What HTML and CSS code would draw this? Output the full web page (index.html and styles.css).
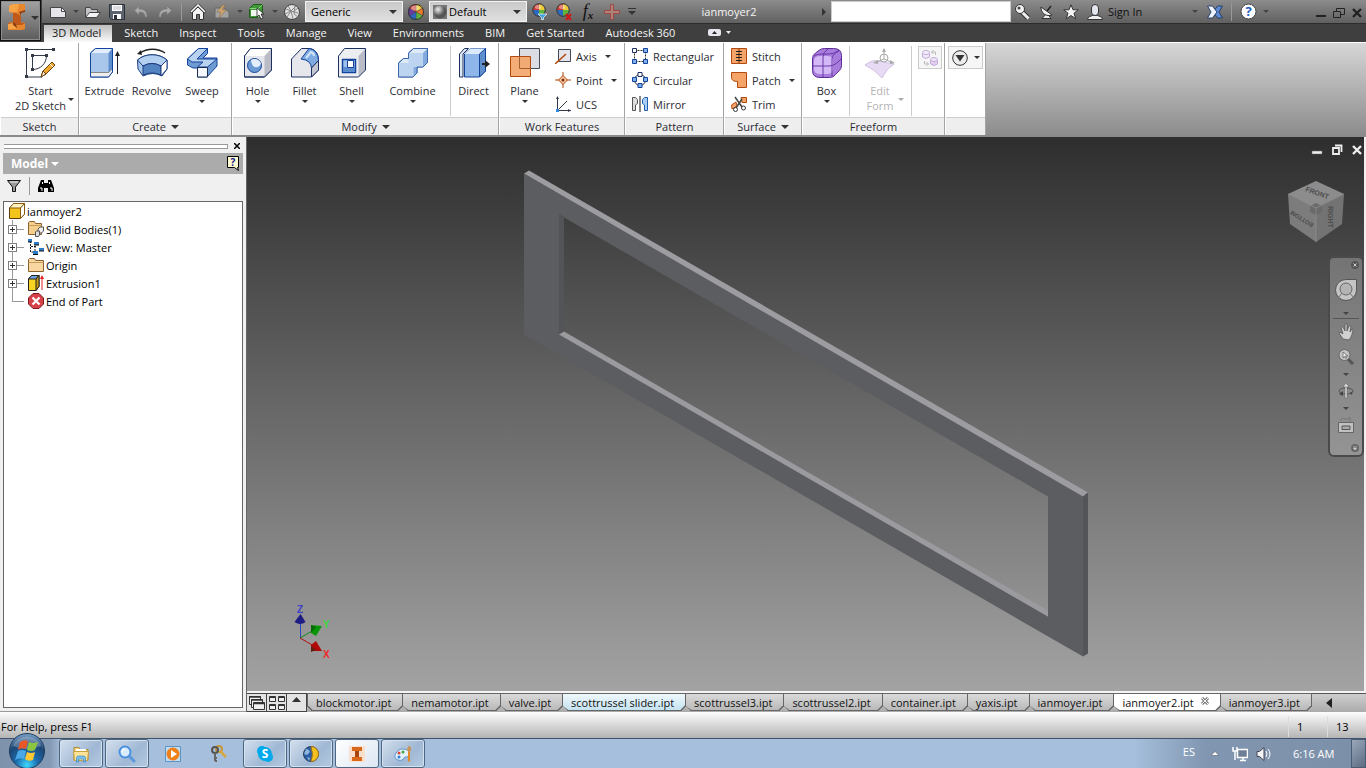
FILE: index.html
```html
<!DOCTYPE html>
<html lang="en">
<head>
    <meta charset="UTF-8">
    <meta name="viewport" content="width=device-width, initial-scale=1.0">
    <title>ianmoyer2</title>
    <link rel="stylesheet" href="styles.css">
</head>
<body>
    <header class="top">
        <button class="app-btn" aria-label="Application menu">
            <svg width="18" height="28" viewBox="0 0 18 28">
                <path fill="#e8862e" d="M1 2 5 0h12v8l-4 1v9l4 1v6l-3 1H0v-7l5-1V9L1 8z"/>
                <path fill="#c05a1c" d="M5 9h3l5 3v7l-5 1-3-2zM0 19l8-1 9 1-3 2H0z"/>
                <path fill="#f7a446" d="M1 2 5 0h6L9 8H5L1 8zM0 20l6-1 2 6H0z"/>
                <path fill="#8d3f14" d="m11 8 6-2v2l-4 1v3zM5 18l3 2 1 4-4-3z"/>
            </svg>
            <span class="caret big"></span>
        </button>
        <div class="title-bar">
            <button class="q-btn" aria-label="New">
                <svg width="16" height="16" viewBox="0 0 16 16"><path d="M.5 3.500h11l4 4v6H.5z" fill="#e6e6ea" stroke="#44444a"/><path d="M11.500 3.500v4h4z" fill="#fff" stroke="#44444a"/></svg>
            </button>
            <button class="q-drop" aria-label="New options"><span class="caret dim"></span></button>
            <button class="q-btn" aria-label="Open">
                <svg width="16" height="16" viewBox="0 0 16 16"><path d="M.5 13.500v-10h5l1 2h6v3" fill="#c4c4c8" stroke="#444"/><path d="m.5 13.500 4-5h11l-4 5z" fill="#f4f4f4" stroke="#444"/></svg>
            </button>
            <button class="q-btn" aria-label="Save">
                <svg width="16" height="16" viewBox="0 0 16 16"><path d="M.5.500h15v15h-13l-2-2z" fill="#5c6470" stroke="#2c3038"/><path d="M3 1h10v6H3z" fill="#fff"/><path d="M4 3h8M4 5h8" stroke="#b8bcc4"/><path d="M4 10h8v5H4z" fill="#fff"/><path d="M5 11h3v4H5z" fill="#2c3038"/></svg>
            </button>
            <button class="q-btn" aria-label="Undo">
                <svg width="14" height="14" viewBox="0 0 14 14"><path d="M.5 5.500 5 1v3c5 0 8 2 8 8h-2c0-4-2-5-6-5v3z" fill="#aaa" stroke="#777" stroke-width=".6"/></svg>
            </button>
            <button class="q-btn" aria-label="Redo">
                <svg width="14" height="14" viewBox="0 0 14 14"><path d="M13.500 5.500 9 1v3c-5 0-8 2-8 8h2c0-4 2-5 6-5v3z" fill="#aaa" stroke="#777" stroke-width=".6"/></svg>
            </button>
            <span class="q-sep"></span>
            <button class="q-btn" aria-label="Home">
                <svg width="16" height="16" viewBox="0 0 16 16"><path d="M2.500 8v7.500h4v-5h3v5h4V8L8 3z" fill="#f2f2f2" stroke="#333"/><path d="M.5 8.500 8 1l7.500 7.500" fill="none" stroke="#333" stroke-width="3"/><path d="M1 8 8 1l7 7" fill="none" stroke="#fff" stroke-width="1.500"/></svg>
            </button>
            <button class="q-btn" aria-label="Update">
                <svg width="16" height="16" viewBox="0 0 16 16"><path d="M1 4h9l5 4v6H1z" fill="#a2a2a2" stroke="#666"/><path d="M9 1 3 8h4l-2 6 7-8H8l3-5z" fill="#d0a870" stroke="#8a6234" stroke-width=".5"/></svg>
            </button>
            <button class="q-drop" aria-label="Update options"><span class="caret dim"></span></button>
            <button class="q-btn" aria-label="Selection">
                <svg width="16" height="16" viewBox="0 0 16 16"><path d="m.5 4.500 4-4h9v9l-4 4h-9z" fill="#3e9a36" stroke="#1e5a1a"/><path d="M2 6h6v6H2z" fill="#f2f6f0"/><path d="m9.500 4.500 4-4m-13 4h9v9" stroke="#8cd084" fill="none"/><path d="M8 4v9l2-2 2 4 2-1-2-4h3z" fill="#fff" stroke="#222" stroke-width=".8"/></svg>
            </button>
            <button class="q-drop" aria-label="Selection options"><span class="caret dim"></span></button>
            <button class="q-btn" aria-label="Adjust material">
                <svg width="16" height="16" viewBox="0 0 16 16"><circle cx="8" cy="8" r="7.500" fill="#e0e0e0" stroke="#444"/><path d="m2 5 5 2 5-5M1 10l6-3 2 8M7 7l7 2M4 2l3 5-4 6M11 1l-1 9 4 3M9 8l5-4" stroke="#888" fill="none"/></svg>
            </button>
            <div class="pick">
                <select aria-label="Material"><option>Generic</option></select>
                <span class="caret big"></span>
            </div>
            <button class="q-btn" aria-label="Appearance">
                <svg width="16" height="16" viewBox="0 0 16 16"><g stroke="#444" stroke-width=".4"><path d="M8 8V0a8 8 0 0 1 7 4z" fill="#f0c93c"/><path d="m8 8 7-4a8 8 0 0 1 0 8z" fill="#e87c2c"/><path d="m8 8 7 4a8 8 0 0 1-7 4z" fill="#5fb53c"/><path d="M8 8v8a8 8 0 0 1-7-4z" fill="#2a69c4"/><path d="m8 8-7 4a8 8 0 0 1 0-8z" fill="#6a3ba0"/><path d="M8 8 1 4a8 8 0 0 1 7-4z" fill="#d23a34"/></g><circle cx="8" cy="8" r="7.500" fill="none" stroke="#333"/><ellipse cx="7" cy="4" rx="4" ry="2.500" fill="#fff" opacity=".4"/></svg>
            </button>
            <div class="pick">
                <svg width="14" height="14" viewBox="0 0 14 14"><defs><radialGradient id="ball" cx=".35" cy=".3"><stop offset="0" stop-color="#eee"/><stop offset="1" stop-color="#555"/></radialGradient></defs><path fill="#777" d="M0 0h14v14H0z"/><circle cx="7" cy="7" r="6.500" fill="url(#ball)"/></svg>
                <select aria-label="Appearance style"><option>Default</option></select>
                <span class="caret big"></span>
            </div>
            <button class="q-btn" aria-label="Adjust appearance">
                <svg width="16" height="18" viewBox="0 0 16 18"><path d="M7 7V1a6 6 0 0 1 6 6z" fill="#f0c93c"/><path d="M7 7h6a6 6 0 0 1-6 6z" fill="#5fb53c"/><path d="M7 7v6a6 6 0 0 1-6-6z" fill="#2a69c4"/><path d="M7 7H1a6 6 0 0 1 6-6z" fill="#d23a34"/><ellipse cx="6" cy="4" rx="3" ry="2" fill="#fff" opacity=".4"/><circle cx="7" cy="7" r="6.300" fill="none" stroke="#333"/><path d="M6 11h9l-3.500 3.500v2h-2v-2z" fill="#3aa0e0" stroke="#fff" stroke-width=".7"/></svg>
            </button>
            <button class="q-btn" aria-label="Clear appearance">
                <svg width="16" height="18" viewBox="0 0 16 18"><path d="M7 7V1a6 6 0 0 1 6 6z" fill="#f0c93c"/><path d="M7 7h6a6 6 0 0 1-6 6z" fill="#5fb53c"/><path d="M7 7v6a6 6 0 0 1-6-6z" fill="#2a69c4"/><path d="M7 7H1a6 6 0 0 1 6-6z" fill="#d23a34"/><ellipse cx="6" cy="4" rx="3" ry="2" fill="#fff" opacity=".4"/><circle cx="7" cy="7" r="6.300" fill="none" stroke="#333"/><path d="m10 11 5 6m0-6-5 6" stroke="#d01818" stroke-width="2"/></svg>
            </button>
            <button class="q-btn fx" aria-label="Parameters"><i>f</i><sub>x</sub></button>
            <button class="q-btn" aria-label="Add">
                <svg width="16" height="16" viewBox="0 0 16 16"><path d="M6.500.500h3v6h6v3h-6v6h-3v-6h-6v-3h6z" fill="#b0827c" stroke="#a04840"/></svg>
            </button>
            <button class="q-drop wide" aria-label="Customize">
                <svg width="8" height="7" viewBox="0 0 8 7"><path d="M0 0h8v1H0zM0 3h8L4 7z" fill="#333"/></svg>
            </button>
            <h1 class="doc-title">ianmoyer2</h1>
            <span class="arrow-right"></span>
            <input class="search" type="text" aria-label="Search help">
            <button class="q-btn" aria-label="Search">
                <svg width="16" height="16" viewBox="0 0 16 16"><path d="m7 8 6 6" stroke="#333" stroke-width="5"/><path d="m7 8 6.500 6.500" stroke="#f0f0f0" stroke-width="3"/><circle cx="5" cy="5" r="4.500" fill="#f0f0f0" stroke="#333"/><circle cx="4" cy="4" r="1.500" fill="#444"/></svg>
            </button>
            <button class="q-btn" aria-label="Communication center">
                <svg width="16" height="16" viewBox="0 0 16 16"><path d="M3 14.500 8 9l4 5.500z" fill="#eee" stroke="#333"/><path d="M2 3a8 8 0 0 0 11 8z" fill="#f2f2f2" stroke="#333"/><path d="m8 7 4-5" stroke="#222" stroke-width="1.500"/></svg>
            </button>
            <button class="q-btn" aria-label="Favorites">
                <svg width="16" height="16" viewBox="0 0 16 16"><path d="m8 .8 2 5h5.300L11 9.200l1.700 5.600L8 11.500l-4.700 3.300L5 9.200.7 5.800H6z" fill="#f4f4f4" stroke="#333"/></svg>
            </button>
            <button class="q-btn" aria-label="Account">
                <svg width="16" height="16" viewBox="0 0 16 16"><path d="M.5 15.500c0-3 3-3 5-4h5c2 1 5 1 5 4z" fill="#eee" stroke="#333"/><rect x="4.500" y=".5" width="7" height="11" rx="3.500" fill="#e4e6ee" stroke="#333"/></svg>
            </button>
            <button class="sign-in">Sign In<span class="caret dim"></span></button>
            <button class="q-btn" aria-label="Exchange apps">
                <svg width="16" height="14" viewBox="0 0 16 14"><path d="M15.500 1h-5L6 7l4.500 6h5L12 7z" fill="#5d8ad0" stroke="#27406c"/><path d="M.5 1h5L10 7l-4.500 6h-5L4 7z" fill="#eef2fa" stroke="#27406c"/></svg>
            </button>
            <span class="q-sep"></span>
            <button class="q-btn" aria-label="Help">
                <svg width="17" height="17" viewBox="0 0 17 17"><circle cx="8.500" cy="8.500" r="7.500" fill="#fff" stroke="#444"/><text x="8.500" y="13" text-anchor="middle" class="q-mark">?</text></svg>
            </button>
            <button class="q-drop" aria-label="Help options"><span class="caret dim"></span></button>
            <div class="win-btns">
                <button aria-label="Minimize"><svg width="10" height="12" viewBox="0 0 10 12"><path fill="#222" d="M0 8h10v2H0z"/></svg></button>
                <button aria-label="Restore"><svg width="12" height="12" viewBox="0 0 12 12"><path d="M3.500 4V1.500h8v6H8M.5 4.500h7v6h-7z" fill="none" stroke="#222"/></svg></button>
                <button aria-label="Close"><svg width="10" height="12" viewBox="0 0 10 12"><path d="m1 2 8 8m0-8-8 8" stroke="#222" stroke-width="2.400"/></svg></button>
            </div>
        </div>
        <nav class="ribbon-tabs">
            <a href="#" class="active">3D Model</a>
            <a href="#">Sketch</a>
            <a href="#">Inspect</a>
            <a href="#">Tools</a>
            <a href="#">Manage</a>
            <a href="#">View</a>
            <a href="#">Environments</a>
            <a href="#">BIM</a>
            <a href="#">Get Started</a>
            <a href="#">Autodesk 360</a>
            <button class="collapse" aria-label="Minimize ribbon">
                <svg width="24" height="8" viewBox="0 0 24 8"><rect width="13" height="7" rx="2" fill="#e6e6ee"/><path d="m4 5 2.500-3L9 5z" fill="#222"/><path d="M18 2h5l-2.500 3z" fill="#eee"/></svg>
            </button>
        </nav>
    </header>

    <section class="ribbon">
        <div class="panel">
            <div class="panel-body">
                <button class="big-btn side start">
                    <span>
                        <svg width="32" height="32" viewBox="0 0 32 32"><path d="M30 2.500H2.500V30H18M8.500 22.500v-14h14c0 8-6 14-14 14" fill="none" stroke="#333a48"/><path d="M1 1h3v3H1zM28 1h3v3h-3zM1 28h3v3H1zM7 7h3v3H7zM21 7h3v3h-3zM7 21h3v3H7z" fill="#333a48"/><path d="m17 30 2-6L28 15l3 3-9 9z" fill="#f0a830" stroke="#6b4410"/><path d="m17 30 2-6 3 3z" fill="#f4e4c8" stroke="#6b4410"/><path d="m26 17 3 3" stroke="#fff"/></svg>
                        Start<br>2D Sketch
                    </span>
                    <i class="caret"></i>
                </button>
            </div>
            <h2>Sketch</h2>
        </div>

        <div class="panel">
            <div class="panel-body">
                <button class="big-btn">
                    <svg width="32" height="32" viewBox="0 0 32 32"><path d="m1.500 6 5-4.500h17V25l-4 5h-18z" fill="#a9c7ea" stroke="#14439c"/><path d="m1.500 6 5-4.500h17L19.500 6z" fill="#e2eefb"/><path d="m19.500 6 4-4.500V25l-4 5z" fill="#5f8fcc"/><path d="M2 26h17.500l4-4v3l-4 5H2z" fill="#eee"/><path d="M2 25.500h17.500l4-4" stroke="#888" fill="none"/><path d="m1.500 6 5-4.500h17V25l-4 5h-18z" fill="none" stroke="#14439c"/><path d="M28.500 27V6" stroke="#222"/><path d="m26 9 2.500-5L31 9z" fill="#222"/></svg>
                    Extrude
                </button>
                <button class="big-btn">
                    <svg width="32" height="32" viewBox="0 0 32 32"><path d="M29 6C22 1 11 1 4 6" fill="none" stroke="#222" stroke-width="1.500"/><path d="M1 7 5 3l1 5z" fill="#222"/><path d="M1.500 13C9 6 23 6 31 13v9l-5 7q-9-5-19 0l-5-7z" fill="#a9c7ea" stroke="#1c3e80"/><path d="M1.500 13 7 19q9-5 18 0l6-6C23 6 9 6 1.500 13z" fill="#b4d0f0" stroke="#1c3e80"/><path d="M7 19q9-5 18 0v9q-9-4-18 0z" fill="#5383c0" stroke="#1c3e80"/><path d="m25 19 6-6v9l-6 7z" fill="#fff" stroke="#1c3e80"/></svg>
                    Revolve
                </button>
                <button class="big-btn sweep">
                    <svg width="32" height="32" viewBox="0 0 32 32"><path d="m1.500 12 11-10.500h9v5L17 11h14v8L21 30H11.500v-9H7l-5.500-3z" fill="#6f9bd2" stroke="#14439c"/><path d="m1.500 12 11-10.500h9L11 12h20l-9.500 8h-10L17 15H6z" fill="#b8d2f0" stroke="#14439c"/><path d="M11.500 20.500h10V30h-10z" fill="#f4f7fb" stroke="#1c2c50"/></svg>
                    Sweep
                    <i class="caret"></i>
                </button>
            </div>
            <h2>Create <i class="caret big"></i></h2>
        </div>

        <div class="panel">
            <div class="panel-body">
                <button class="big-btn">
                    <svg width="32" height="32" viewBox="0 0 32 32"><path d="m2.500 9 6-7.500h21V23l-7 7h-20z" fill="#e6e7ec" stroke="#1c3060"/><path d="M2.500 9 8.500 1.500h21L22.500 9z" fill="#fff"/><path d="m22.500 9 7-7.500V23l-7 7z" fill="#b9bcc6"/><path d="m2.500 9 6-7.500h21V23l-7 7h-20z" fill="none" stroke="#1c3060"/><circle cx="12.500" cy="18.500" r="7" fill="#6a9ad4" stroke="#14439c"/><path d="M9 13a7 7 0 0 1 10 3c-1 5-6 5-8 3-1-2-2-4-2-6z" fill="#e4effb"/></svg>
                    Hole
                    <i class="caret"></i>
                </button>
                <button class="big-btn">
                    <svg width="32" height="32" viewBox="0 0 32 32"><path d="m2.500 12 10-10.500h9q8 2 8 12V23l-7 7h-20z" fill="#e6e7ec" stroke="#1c3060"/><path d="m12 12 8-10.500q9 1 9.500 12l-7 7.500Q22 13 12 12z" fill="#7fabe0" stroke="#14439c"/><path d="m22.500 21 7-7.500V23l-7 7z" fill="#c4c7d0" stroke="#1c3060"/><path d="m17 11 5-6q3 1 3 4" stroke="#cfe4fa" fill="none" stroke-width="2"/></svg>
                    Fillet
                    <i class="caret"></i>
                </button>
                <button class="big-btn">
                    <svg width="32" height="32" viewBox="0 0 32 32"><path d="m2.500 9 6-7.500h21V23l-7 7h-20z" fill="#eceef2"/><path d="m22.500 9 7-7.500V23l-7 7z" fill="#b9bcc6"/><path d="m2.500 9 6-7.500h21V23l-7 7h-20z" fill="none" stroke="#1c3060"/><path d="M6.500 12.500h13v13h-13z" fill="#9dc0ec" stroke="#14439c" stroke-width="1.500"/><path d="M7 20v5h12v-5z" fill="#5c8cd0"/><path d="M11.500 13.500h6v7h-6z" fill="#fff" stroke="#14439c"/></svg>
                    Shell
                    <i class="caret"></i>
                </button>
                <button class="big-btn combine">
                    <svg width="32" height="32" viewBox="0 0 32 32"><path d="m1.500 16 5-4.500h5V6l5-4.500h14v14L26 20h-6v6l-4 4H1.500z" fill="#dce9f8" stroke="#3c68ac"/><path d="M11.500 6H26v14h-9.500v-4h-5zM1.500 16h15v14h-15z" fill="#bdd4f0"/><path d="m26 6 4.500-4.500v14L26 20zM16.500 20H20v6l-3.500 4z" fill="#84aade"/><path d="m1.500 16 5-4.500h5V6l5-4.500h14v14L26 20h-6v6l-4 4H1.500z" fill="none" stroke="#3c68ac"/></svg>
                    Combine
                    <i class="caret"></i>
                </button>
                <span class="rule"></span>
                <button class="big-btn">
                    <svg width="32" height="32" viewBox="0 0 32 32"><path d="m1.500 7 5-5.500h4L5 7v23H1.500z" fill="#dfe8f4" stroke="#1c3060"/><path d="m6.500 7 6-5.500h15V24l-6 6h-15z" fill="#8eb6e8" stroke="#14439c"/><path d="m6.500 7 6-5.500h15L21.500 7z" fill="#dcebfb"/><path d="m21.500 7 6-5.500V24l-6 6z" fill="#5f8fcc" stroke="#14439c"/><path d="M24 17h6" stroke="#222" stroke-width="2"/><path d="m27 13 5 4-5 4z" fill="#222"/></svg>
                    Direct
                </button>
            </div>
            <h2>Modify <i class="caret big"></i></h2>
        </div>

        <div class="panel">
            <div class="panel-body">
                <button class="big-btn plane">
                    <svg width="32" height="32" viewBox="0 0 32 32"><path d="M10.500 1.500h20v20h-20z" fill="#dcdde2" stroke="#444a58"/><path d="M1.500 9.500h20v20h-20z" fill="#f4a468" fill-opacity=".9" stroke="#b24a10"/><path d="M10.500 9.500v12h11" fill="none" stroke="#a06030"/></svg>
                    Plane
                    <i class="caret"></i>
                </button>
                <div class="stack work">
                    <button><svg width="16" height="16" viewBox="0 0 16 16"><path d="M3.500 1.500h12v12h-12z" fill="#e4e5ea" stroke="#444a58"/><path d="m0 16 11-10" stroke="#b24a10" stroke-width="1.500"/></svg>Axis<i class="caret"></i></button>
                    <button><svg width="16" height="16" viewBox="0 0 16 16"><path d="m8 3.500 4.500 4.500L8 12.500 3.500 8z" fill="#f8c8a0" stroke="#b24a10"/><path d="M8 0v4m0 8v4M0 8h4m8 0h4" stroke="#b24a10"/><circle cx="8" cy="8" r="1.500" fill="#7a3008"/></svg>Point<i class="caret"></i></button>
                    <button><svg width="16" height="16" viewBox="0 0 16 16"><path d="M2.500 1v13.500H16M3 14l9-9" fill="none" stroke="#333a48"/><path d="M1 3 2.500 0 4 3m9 10 3 1.500-3 1.500" fill="#333a48"/><path d="M1 13h3v3H1z" fill="#2c8ae0"/></svg>UCS</button>
                </div>
            </div>
            <h2>Work Features</h2>
        </div>

        <div class="panel">
            <div class="panel-body">
                <div class="stack pattern">
                    <button><svg width="16" height="16" viewBox="0 0 16 16"><path d="M2.500 2.500h11v11h-11z" fill="none" stroke="#333" stroke-dasharray="2 1"/><path d="M.5.500h4v4h-4z" fill="#fff" stroke="#1c3060"/><path d="M11.500.500h4v4h-4zM.5 11.500h4v4h-4zM11.500 11.500h4v4h-4z" fill="#7fb0ec" stroke="#14439c"/></svg>Rectangular</button>
                    <button><svg width="16" height="16" viewBox="0 0 16 16"><circle cx="8" cy="8" r="5.500" fill="none" stroke="#333"/><path d="M6 .5h4v4H6z" fill="#fff" stroke="#1c3060"/><path d="M.5 5.500h4v4h-4zM11.500 5.500h4v4h-4zM6 11.500h4v4H6z" fill="#7fb0ec" stroke="#14439c"/></svg>Circular</button>
                    <button><svg width="16" height="16" viewBox="0 0 16 16"><path d="M.5 1.500h3l2 2v4L3.500 9v5.500h-3z" fill="#ddd" stroke="#555"/><path d="M15.500 1.500h-3l-2 2v4l2 1.500v5.500h3z" fill="#a9ccf4" stroke="#1c60b4"/><path d="M8 0v16" stroke="#111"/></svg>Mirror</button>
                </div>
            </div>
            <h2>Pattern</h2>
        </div>

        <div class="panel">
            <div class="panel-body">
                <div class="stack surface">
                    <button><svg width="16" height="16" viewBox="0 0 16 16"><path d="M.5.500h15v15H.5z" fill="#f4a468" stroke="#b24a10"/><path d="M8 1v14" stroke="#7a3008"/><path d="M5 3.500h6m-6 3h6m-6 3h6m-6 3h6" stroke="#222"/></svg>Stitch</button>
                    <button><svg width="16" height="16" viewBox="0 0 16 16"><path d="M.5.500h15v15h-9v-6q-6 0-6-4z" fill="#f4a468" stroke="#b24a10"/></svg>Patch<i class="caret"></i></button>
                    <button><svg width="16" height="16" viewBox="0 0 16 16"><path d="M10 1.500h5.500v5H11zM.5 9 5 6l1 4-5 3z" fill="#f4a468" stroke="#b24a10"/><path d="m4 1 7 10M11 3 5 12" stroke="#444" stroke-width="1.500"/><circle cx="4.500" cy="13.500" r="2" fill="#fff" stroke="#333"/><circle cx="12.500" cy="12" r="2" fill="#fff" stroke="#333"/></svg>Trim</button>
                </div>
            </div>
            <h2>Surface <i class="caret big"></i></h2>
        </div>

        <div class="panel">
            <div class="panel-body">
                <button class="big-btn box">
                    <svg width="32" height="32" viewBox="0 0 32 32"><path d="M1.500 12q0-4 3-6l4-3q2-1.500 5-1.500h9q8 0 8 7v10q0 3-2 5l-4 4q-2 3-6 3H9q-7.500 0-7.500-7z" fill="#a87cdc" stroke="#5a2c96"/><path d="M3 14q0-5 6-5h7q6 0 6 5v7q0 6-6 6H9q-6 0-6-6z" fill="#d4b8f6"/><path d="M2 19h16q6 0 12-7M12 30V10q0-5 5-8M21 29V12q0-5 7-8M3 9q3-2 8-2h7q6 0 10-4" fill="none" stroke="#6a38a8"/></svg>
                    Box
                    <i class="caret"></i>
                </button>
                <span class="rule"></span>
                <button class="big-btn side edit" disabled>
                    <span>
                        <svg width="32" height="32" viewBox="0 0 32 32"><path d="M1 18q8-6 15-4 6 2 14 3-8 5-12 14Q10 22 1 18z" fill="#e6daf4" stroke="#d0c0e0"/><path d="M20 12V2m0 10 9 4m-9-4-9 4" stroke="#aaa"/><path d="m18 5 2-4 2 4zm8 8 5 3-5 1zm-12 0-5 3 5 1z" fill="#aaa"/><circle cx="20" cy="11" r="4" fill="none" stroke="#aaa"/></svg>
                        Edit<br>Form
                    </span>
                    <i class="caret"></i>
                </button>
                <span class="rule"></span>
                <button class="tool" disabled aria-label="Convert">
                    <svg width="18" height="18" viewBox="0 0 18 18"><path d="M1.500 4v4q3.500 3 7 0V4" fill="#f0e8fa" stroke="#c4acdc"/><ellipse cx="5" cy="3.500" rx="3.500" ry="2" fill="#f6f0fc" stroke="#c4acdc"/><path d="M9.500 11v4q3.500 3 7 0v-4" fill="#e0d0f0" stroke="#c4acdc"/><ellipse cx="13" cy="10.500" rx="3.500" ry="2" fill="#eee4f8" stroke="#c4acdc"/><path d="M14.500 6V3h-4m2-2-2 2 2 2M3.500 12v3h4m-2-2 2 2-2 2" fill="none" stroke="#bbb"/></svg>
                </button>
            </div>
            <h2>Freeform</h2>
        </div>

        <div class="panel">
            <div class="panel-body">
                <button class="tool wide" aria-label="Panel options">
                    <svg width="16" height="16" viewBox="0 0 16 16"><circle cx="8" cy="8" r="7.300" fill="#ececec" stroke="#333"/><path d="M3.500 5h9L8 11.500z" fill="#333"/></svg>
                    <i class="caret"></i>
                </button>
            </div>
            <h2></h2>
        </div>
    </section>

    <main>
        <aside class="browser">
            <div class="grip"><span></span><button aria-label="Close browser"><svg width="6" height="6" viewBox="0 0 6 6"><path d="m0 0 6 6m0-6-6 6" stroke="#000" stroke-width="1.500"/></svg></button></div>
            <div class="browser-title">
                <h2>Model <i class="caret big"></i></h2>
                <button aria-label="Browser help"><svg width="14" height="15" viewBox="0 0 14 15"><path d="M1.500.500h11v11h-1l1 3-4-3h-7z" fill="#fffbd0" stroke="#000"/><text x="7" y="10" text-anchor="middle" class="tip-mark">?</text></svg></button>
            </div>
            <div class="browser-tools">
                <button aria-label="Filter"><svg width="14" height="12" viewBox="0 0 14 12"><path d="M.5.500h13L8.500 7v4.500h-3V7z" fill="#999" stroke="#111"/><path d="M3 2h8" stroke="#eee"/></svg></button>
                <span></span>
                <button aria-label="Find"><svg width="16" height="14" viewBox="0 0 16 14"><path d="M3 1h3v3h4V1h3l3 8v4h-6V9H6v4H0V9z" fill="#000"/><path d="M2 9h2v3M12 9h2v3M4.500 3v2m7-2v2" stroke="#fff" fill="none"/></svg></button>
            </div>
            <ul class="tree">
                <li class="root">
                    <svg width="18" height="18" viewBox="0 0 18 18"><path d="m1.500 6 4-4.500h11V12l-4 4.500h-11z" fill="#f2c41c" stroke="#5a3c10"/><path d="m1.500 6 4-4.500h11L12.500 6z" fill="#fff4c0" stroke="#8a5a14"/><path d="m12.500 6 4-4.500V12l-4 4.500z" fill="#fff" stroke="#8a5a14"/></svg>
                    ianmoyer2
                </li>
                <li>
                    <button class="expander" aria-label="Expand Solid Bodies"></button>
                    <svg width="16" height="16" viewBox="0 0 16 16"><path d="M.5 13.500V1.500l1-1h5l1 2h6v11z" fill="#f4d08c" stroke="#8a6030"/><path d="M.5 4.500h13" stroke="#c89c58"/><path d="m10 8 2-2h3.500v4l-2 2H10z" fill="#eee" stroke="#555"/><path d="m7.500 11 1-1h3v4l-1 1.500h-3z" fill="#ddd" stroke="#555"/></svg>
                    Solid Bodies(1)
                </li>
                <li>
                    <button class="expander" aria-label="Expand View"></button>
                    <svg width="16" height="16" viewBox="0 0 16 16"><path d="M2.500 2v11H7M3 7.500h5M7 7v6" fill="none" stroke="#222" stroke-dasharray="2 1"/><path d="M0 0h4v3H0zM6 3h5v3H6zM11 9h5v3h-5zM5 12h5v3H5z" fill="#2a7ac8"/><path d="M6 6h5M11 12h5M5 15.500h5M0 3h4" stroke="#111"/></svg>
                    View: Master
                </li>
                <li>
                    <button class="expander" aria-label="Expand Origin"></button>
                    <svg width="16" height="16" viewBox="0 0 16 16"><path d="M.5 14.500V2.500l1-1h5l1 2h8v11z" fill="#f8d8a0" stroke="#8a6030"/><path d="M.5 5.500h15" stroke="#c89c58"/></svg>
                    Origin
                </li>
                <li>
                    <button class="expander" aria-label="Expand Extrusion1"></button>
                    <svg width="16" height="16" viewBox="0 0 16 16"><path d="m.5 4 3-3.500h7.500v11L8 15.500H.500z" fill="#f8d420" stroke="#222"/><path d="m.5 4 3-3.500H11L8 4z" fill="#6fa4dc" stroke="#222"/><path d="m8 4 3-3.500v11L8 15.500z" fill="#c89810" stroke="#222"/><path d="M14 15V2" stroke="#e02020"/><path d="m12 4 2-4 2 4z" fill="#e02020"/></svg>
                    Extrusion1
                </li>
                <li class="end">
                    <span class="expander"></span>
                    <svg width="16" height="16" viewBox="0 0 16 16"><path d="M5 .5h6L15.500 5v6L11 15.500H5L.5 11V5z" fill="#d8404a" stroke="#7c1820"/><path d="m4.500 4.500 7 7m0-7-7 7" stroke="#fff" stroke-width="2.200"/></svg>
                    End of Part
                </li>
            </ul>
        </aside>

        <section class="work-area">
            <div class="canvas">
                <svg class="model" viewBox="247 138 1117 553">
                    <path fill="#5c5d61" fill-rule="evenodd" d="M524 174 1083 496V657L524 335zM559 215V335L1048 617V497z"/>
                    <path fill="#9c9ca1" d="m524 174 5-3 559 322-5 4z"/>
                    <path fill="#535458" d="m1083 497 5-4v161l-5 3zM559 215l5 3v115l-5 2z"/>
                    <path fill="#9a9a9f" d="m559 335 5-3 484 279v6z"/>
                </svg>

                <div class="doc-btns">
                    <button aria-label="Minimize document"><svg width="12" height="12" viewBox="0 0 12 12"><path fill="#eee" stroke="#666" stroke-width=".5" d="M1 7h10v3H1z"/></svg></button>
                    <button aria-label="Restore document"><svg width="12" height="12" viewBox="0 0 12 12"><path d="M4 1.500h6.500V8M2 4h6v6H2z" fill="none" stroke="#eee" stroke-width="1.800"/></svg></button>
                    <button aria-label="Close document"><svg width="12" height="12" viewBox="0 0 12 12"><path d="m2 2 8 8m0-8-8 8" stroke="#eee" stroke-width="2.400"/></svg></button>
                </div>

                <svg class="view-cube" width="58" height="64" viewBox="0 0 58 64">
                    <path fill="#8c8c8c" d="M29 1 57 14 29 28 1 14z"/>
                    <path fill="#7c7c7c" d="m1 14 28 14v34L3 44z"/>
                    <path fill="#737373" d="M57 14 29 28v34l26-18z"/>
                    <path fill="#6a6a6a" d="m29 23 6 3v6l-6 3-6-3v-6z"/>
                    <path fill="none" stroke="#999" stroke-width=".6" d="m1 14 28 14 28-14M29 28v34"/>
                    <text transform="translate(18 11) rotate(20)">FRONT</text>
                    <text class="small" transform="translate(27 44) rotate(212)">BOTTOM</text>
                    <text transform="translate(41 26) rotate(90)">RIGHT</text>
                </svg>

                <div class="nav-bar">
                    <button class="mini" aria-label="Close navigation bar"><svg width="8" height="8" viewBox="0 0 8 8"><circle cx="4" cy="4" r="4" fill="#555"/><path d="m2.500 2.500 3 3m0-3-3 3" stroke="#ccc"/></svg></button>
                    <button class="wheel" aria-label="Steering wheel"><svg width="22" height="22" viewBox="0 0 22 22"><path d="M11 .5h10.500V11A10.500 10.500 0 1 1 11 .5z" fill="#c4c4c4" stroke="#555"/><circle cx="11" cy="10" r="6" fill="#b4b4b4" stroke="#666"/><path d="m7 14-3 4m11-4 3 4" stroke="#777"/></svg></button>
                    <i class="caret dim"></i>
                    <hr>
                    <button aria-label="Pan"><svg width="16" height="18" viewBox="0 0 16 18"><path d="M5 16 1 10q0-2 4 1L3 4q1-1 2 0l2 4V1q1-1 2 0v7l2-5q1-1 2 0l-1 6 2-3q1 0 1 1-1 7-4 10z" fill="#d0d0d0" stroke="#555" stroke-width=".8"/></svg></button>
                    <button aria-label="Zoom"><svg width="16" height="16" viewBox="0 0 16 16"><path d="m9 9 6 6" stroke="#555" stroke-width="3"/><circle cx="6.500" cy="6" r="5.500" fill="#c4c4c4" stroke="#666"/><path d="M5 3v6l1.500-1.500 1 2 1-.5-1-2H10z" fill="#eee" stroke="#555" stroke-width=".7"/></svg></button>
                    <i class="caret dim"></i>
                    <button aria-label="Orbit"><svg width="16" height="16" viewBox="0 0 16 16"><ellipse cx="8" cy="8" rx="7" ry="3" fill="none" stroke="#555"/><path d="M7 3h2v12H7z" fill="#ddd" stroke="#555" stroke-width=".5"/><path d="m5 4 3-4 3 4z" fill="#ddd" stroke="#555" stroke-width=".5"/><path d="m1 11 4-3v5zm11-2 3 1-2 2z" fill="#444"/></svg></button>
                    <i class="caret dim"></i>
                    <button aria-label="Look at"><svg width="16" height="16" viewBox="0 0 16 16"><path d="M.5 5.500h15v10H.500z" fill="#c0c0c0" stroke="#666"/><path d="M4 9h8v3.500H4z" fill="#aaa" stroke="#555"/><path d="m2 3 4-2v1h4l2-2v5" stroke="#777" fill="none"/></svg></button>
                    <button class="mini" aria-label="Navigation bar options"><svg width="8" height="8" viewBox="0 0 8 8"><circle cx="4" cy="4" r="4" fill="#666"/><path d="M2 3h4M2.500 4.500h3L4 6z" stroke="#ccc" stroke-width=".8" fill="#ccc"/></svg></button>
                </div>

                <svg class="axes" width="44" height="60" viewBox="0 0 44 60">
                    <path d="M10.500 38.500V18" stroke="#2848c8"/><path d="m10 38 12-7" stroke="#109010"/><path d="m10 38 14 8" stroke="#b01010"/>
                    <path d="m10.500 14 5 8q-5 4-11 0z" fill="#1c1c84"/>
                    <path d="m21 25 11 1-6 10-5-3z" fill="#0a960a"/><path d="m21 25 5 2-5 6z" fill="#066a06"/>
                    <path d="m26 41 6 10H21v-6z" fill="#b00808"/><path d="M21 46v6l5-2z" fill="#602010"/>
                    <text x="7" y="13" fill="#4040c8">Z</text><text x="33" y="28" fill="#3cd83c">Y</text><text x="33" y="58" fill="#f02828">X</text>
                </svg>
            </div>

            <div class="doc-tabs">
                <button class="win" aria-label="Cascade"><svg width="16" height="16" viewBox="0 0 16 16"><g fill="#f0f0f0" stroke="#333"><path d="M.5 1.500h11v8H.5z"/><path d="M2.500 4.500h11v8h-11z"/><path d="M4.500 7.500h11v7h-11z"/></g><path d="M0 2h12M2 5h12M4 8.500h12" stroke="#333" stroke-width="1.500"/></svg></button>
                <button class="win" aria-label="Arrange"><svg width="16" height="14" viewBox="0 0 16 14"><path d="M.5.500h6v5h-6zM9.500.500h6v5h-6zM.5 8.500h6v5h-6zM9.500 8.500h6v5h-6z" fill="#eee" stroke="#333"/><path d="M0 1.500h7m2 0h7m-16 8h7m2 0h7" stroke="#333"/></svg></button>
                <button class="win up" aria-label="List documents"><svg width="9" height="5" viewBox="0 0 9 5"><path d="m0 5 4.500-5L9 5z" fill="#333"/></svg></button>
                <a href="#" class="first">blockmotor.ipt</a>
                <a href="#">nemamotor.ipt</a>
                <a href="#">valve.ipt</a>
                <a href="#" class="hover">scottrussel slider.ipt</a>
                <a href="#">scottrussel3.ipt</a>
                <a href="#">scottrussel2.ipt</a>
                <a href="#">container.ipt</a>
                <a href="#">yaxis.ipt</a>
                <a href="#">ianmoyer.ipt</a>
                <a href="#" class="active">ianmoyer2.ipt<svg width="8" height="8" viewBox="0 0 8 8"><path d="m1 1 6 6m0-6L1 7" stroke="#777" stroke-width="3"/><path d="m1 1 6 6m0-6L1 7" stroke="#fff"/></svg></a>
                <a href="#">ianmoyer3.ipt</a>
                <button class="scroll" aria-label="Scroll tabs"><svg width="6" height="10" viewBox="0 0 6 10"><path d="M6 0v10L0 5z" fill="#222"/></svg></button>
            </div>
        </section>
    </main>

    <div class="status">
        <span class="help">For Help, press F1</span>
        <span class="cell">1</span>
        <span class="cell">13</span>
    </div>

    <footer class="taskbar">
        <button class="start-orb" aria-label="Start">
            <svg width="36" height="36" viewBox="0 0 36 36">
                <defs>
                    <radialGradient id="orb" cx=".5" cy=".9" r=".9"><stop offset="0" stop-color="#3fd8ff"/><stop offset=".35" stop-color="#1c6cac"/><stop offset=".7" stop-color="#1d4674"/><stop offset="1" stop-color="#7fa6cc"/></radialGradient>
                </defs>
                <circle cx="18" cy="18" r="17.500" fill="url(#orb)" stroke="#1c3a5c"/>
                <path d="M4 13a15 15 0 0 1 28 0q-14 6-28 0z" fill="#fff" opacity=".25"/>
                <path d="M11 9q4-3 8-1l-2 8q-4-2-8 1z" fill="#e8572a"/>
                <path d="M20 9q4 2 9 0l-3 8q-4 2-8 0z" fill="#8cc63e"/>
                <path d="M9 18q4-2 8 0l-2 8q-4-2-9 1z" fill="#4aa8e8"/>
                <path d="M18 19q4 2 8 0l-2 8q-5 2-8-1z" fill="#fcc934"/>
            </svg>
        </button>
        <button class="task open" aria-label="Explorer">
            <svg width="18" height="18" viewBox="0 0 18 18"><path d="M2 15V2.500h5l1 2h8V15z" fill="#f4d47c" stroke="#b08a30"/><path d="M4 4h10v4H4z" fill="#fff"/><path d="M1.500 6.500h15l-1 9h-13z" fill="#fbe49a" stroke="#c8a040"/><path d="M4.500 17v-4q0-2 2-2h5q2 0 2 2v4h-2v-3h-5v3z" fill="#7cc4f0" stroke="#2c7cb8" stroke-width=".6"/></svg>
        </button>
        <button class="task open" aria-label="Magnifier">
            <svg width="18" height="18" viewBox="0 0 18 18"><path d="m10 10 6 6" stroke="#5a98dc" stroke-width="3" stroke-linecap="round"/><circle cx="7" cy="7" r="5.500" fill="#d8ecfc" stroke="#4a90e0" stroke-width="2"/><path d="M4 7q0-3 3-3" fill="none" stroke="#fff"/></svg>
        </button>
        <button class="task" aria-label="Media player">
            <svg width="16" height="16" viewBox="0 0 16 16"><path d="M.5.500h15v15H.5z" fill="#c4dcf0" stroke="#5c94c8"/><circle cx="8" cy="8" r="6.500" fill="#f08018"/><path d="m6 4 6 4-6 4z" fill="#fff"/></svg>
        </button>
        <button class="task" aria-label="Keys">
            <svg width="18" height="18" viewBox="0 0 18 18"><circle cx="9" cy="4" r="3" fill="none" stroke="#c89838" stroke-width="2"/><path d="m10 6 6 6" stroke="#d8a840" stroke-width="2.500"/><circle cx="5" cy="5" r="3" fill="none" stroke="#555" stroke-width="2"/><path d="M5 8v8m0-3h2m-2 3h2" stroke="#666" stroke-width="2"/></svg>
        </button>
        <button class="task open" aria-label="Skype">
            <svg width="18" height="18" viewBox="0 0 18 18"><circle cx="6" cy="6" r="5" fill="#00a9ec"/><circle cx="12" cy="12" r="5" fill="#00a9ec"/><circle cx="9" cy="9" r="7" fill="#00a9ec"/><text x="9" y="13" text-anchor="middle" class="s-mark">S</text></svg>
        </button>
        <button class="task open" aria-label="Browser">
            <svg width="18" height="18" viewBox="0 0 18 18"><circle cx="9" cy="9" r="7.500" fill="#2c5ca4" stroke="#283c60"/><path d="M9 1.500a7.500 7.500 0 0 1 0 15q3-7 0-15z" fill="#f4c020" stroke="#a87810"/><path d="M4 4q3 0 4 3l-3 3-3-1zM5 12l3 1-1 3" fill="#8ab4dc"/></svg>
        </button>
        <button class="task current" aria-label="Inventor">
            <svg width="16" height="16" viewBox="0 0 16 16"><path fill="#f8e0cc" d="M0 0h16v16H0z"/><path d="M3 1h10v4h-3v6h3v4H3v-4h3V5H3z" fill="#d8681c"/><path d="M6 5h4v6H6z" fill="#a8440c"/></svg>
        </button>
        <button class="task open" aria-label="Paint">
            <svg width="18" height="18" viewBox="0 0 18 18"><path d="M8 4c5 0 8 2 7 6-1 3-4 1-5 3s-3 3-6 2-4-4-2-7 4-4 6-4z" fill="#e4f0fc" stroke="#5c94c8"/><circle cx="5" cy="8" r="1.500" fill="#e04030"/><circle cx="9" cy="7" r="1.500" fill="#40a840"/><circle cx="5" cy="12" r="1.500" fill="#3080d8"/><path d="m14 6 2 .5V17l-2-1z" fill="#e88820"/><path d="m13 6 1-5 3 1v4z" fill="#c8945c"/></svg>
        </button>
        <div class="tray">
            <span class="lang">ES</span>
            <button aria-label="Hidden icons"><svg width="8" height="5" viewBox="0 0 8 5"><path d="m0 4.500 4-4 4 4z" fill="#fff" stroke="#445" stroke-width=".5"/></svg></button>
            <button aria-label="Network"><svg width="16" height="16" viewBox="0 0 16 16"><path d="M5.500 3.500h10v8h-10z" fill="#6c7f96" stroke="#fff" stroke-width="1.500"/><path d="M8 14.500h6M11 12v3" stroke="#fff" stroke-width="1.500"/><path d="M1 1v4h4V1M3 5v9" stroke="#fff" stroke-width="1.500" fill="none"/></svg></button>
            <button aria-label="Volume"><svg width="16" height="14" viewBox="0 0 16 14"><path d="M1 4.500h2.500L8 .500v13l-4.500-4H1z" fill="#f4f4f4" stroke="#445"/><path d="M10 4q2 3 0 6m2-8q4 5 0 10" fill="none" stroke="#fff"/></svg></button>
            <time>6:16 AM</time>
            <button class="desktop" aria-label="Show desktop"></button>
        </div>
    </footer>
</body>
</html>
```
FILE: styles.css
```css
* {
    margin: 0;
    padding: 0;
    box-sizing: border-box;
}

body {
    display: flex;
    flex-direction: column;
    height: 100vh;
    overflow: hidden;
    font-family: 'Segoe UI', 'Open Sans', 'Noto Sans', sans-serif;
    font-size: 11px;
    line-height: 15px;
    color: #2b2b33;
    background-color: #f0f0f0;
}

button {
    font: inherit;
    color: inherit;
    background: none;
    border: none;
    flex: none;
}

h1, h2 {
    font-size: 11px;
    font-weight: normal;
}

a {
    color: inherit;
    text-decoration: none;
}

svg {
    display: block;
    flex: none;
}

/* small black drop-down triangles */
.caret {
    display: inline-block;
    flex: none;
    border: 3px solid transparent;
    border-top-color: #333;
    border-bottom: none;
}

.caret.big {
    border-width: 4px;
    border-bottom: none;
}

.caret.dim {
    border-top-color: #444;
}

/* title bar */
.top {
    display: grid;
    grid-template-columns: 42px 1fr;
    grid-template-rows: 24px 18px;
    flex: none;
    background-color: #3f3f3f;
}

.app-btn {
    grid-row: 1 / 3;
    display: flex;
    align-items: center;
    gap: 5px;
    width: 41px;
    height: 41px;
    padding: 0 2px 6px 7px;
    border: 1px solid #111;
    background: linear-gradient(#a2a2a2, #5c5c5c);
    box-shadow: inset 0 0 0 1px #8e8e8e;
}

.title-bar {
    display: flex;
    align-items: center;
    padding-left: 4px;
    background: linear-gradient(#8c8c8c, #606060);
    border-bottom: 1px solid #2c2c2c;
}

.q-btn {
    display: flex;
    align-items: center;
    justify-content: center;
    width: 24px;
    height: 23px;
}

.q-drop {
    display: flex;
    align-items: center;
    justify-content: center;
    width: 11px;
    height: 23px;
}

.q-drop.wide {
    width: 16px;
}

.q-sep {
    width: 1px;
    height: 18px;
    margin: 0 4px;
    background-color: #999;
}

.fx {
    font-family: 'Liberation Serif', serif;
    font-size: 18px;
    color: #111;
}

.fx sub {
    font-size: 11px;
    font-style: italic;
    font-weight: bold;
    padding-top: 7px;
}

.pick {
    display: flex;
    align-items: center;
    width: 98px;
    height: 21px;
    margin: 0 1px 0 0;
    padding: 0 5px 0 3px;
    border: 1px solid #f2f2f2;
    background: linear-gradient(#c9c9c9, #e0e0e0);
}

.q-btn + .pick {
    margin-left: 1px;
}

.pick select {
    flex: 1;
    min-width: 0;
    padding-left: 2px;
    appearance: none;
    border: none;
    background: none;
    font: inherit;
    color: #000;
}

.doc-title {
    flex: 1;
    padding-right: 4px;
    text-align: center;
    color: #f4f4f4;
}

.arrow-right {
    margin-right: 5px;
    border: 4px solid transparent;
    border-left-color: #333;
    border-right: none;
}

.search {
    width: 180px;
    height: 21px;
    border: 1px solid #ccc;
    background-color: #fff;
}

.sign-in {
    display: flex;
    align-items: center;
    justify-content: space-between;
    width: 96px;
    padding: 0 5px 0 1px;
    color: #111;
}

.q-mark {
    font: bold 13px 'Open Sans', sans-serif;
    fill: #1c5cc0;
}

.win-btns {
    display: flex;
    gap: 7px;
    padding: 2px 4px 0 45px;
}

/* ribbon tabs */
.ribbon-tabs {
    display: flex;
    align-items: flex-end;
    padding-left: 2px;
    color: #f4f4f4;
}

.ribbon-tabs a {
    height: 17px;
    padding: 0 11px 0 10px;
    line-height: 16px;
}

.ribbon-tabs .active {
    padding: 0 11px 0 8px;
    margin-right: 2px;
    color: #222;
    background: linear-gradient(#bdbdbd, #fafafa);
}

.collapse {
    padding: 0 0 5px 22px;
}

/* ribbon */
.ribbon {
    display: flex;
    flex: none;
    height: 95px;
    background: linear-gradient(#d6d6d6, #8c8c8c);
    border-top: 1px solid #fff;
    border-bottom: 2px solid #8a8a8a;
}

.panel {
    display: flex;
    flex-direction: column;
    background-color: #fff;
    border-right: 1px solid #a4a4a4;
}

.panel-body {
    display: flex;
    flex: 1;
    padding: 1px 2px 0;
}

.panel h2 {
    height: 18px;
    margin-left: 1px;
    line-height: 17px;
    text-align: center;
    background-color: #eee;
    border-top: 1px solid #ccc;
}

.panel h2 .caret {
    margin: 0 0 2px 2px;
}

.big-btn {
    display: flex;
    flex-direction: column;
    align-items: center;
    width: 47px;
    padding-top: 3px;
    align-self: flex-start;
}

.big-btn > svg,
.big-btn span svg {
    margin: 0 auto 4px;
}

.big-btn > .caret {
    margin-top: 2px;
}

.big-btn.side {
    flex-direction: row;
    align-items: flex-end;
    justify-content: flex-end;
    gap: 2px;
    padding-right: 2px;
}

.big-btn.side .caret {
    margin-bottom: 12px;
}

.big-btn:disabled {
    color: #b4b4b4;
}

.big-btn:disabled .caret {
    border-top-color: #aaa;
}

.start {
    width: 74px;
}

.sweep {
    width: 54px;
}

.combine {
    width: 75px;
}

.box {
    width: 45px;
}

.edit {
    width: 61px;
}

.big-btn.edit {
    padding-right: 7px;
}

.plane {
    margin-right: 7px;
}

.rule {
    width: 1px;
    margin: 2px 0 1px;
    background-color: #ccc;
}

.rule + .big-btn:last-child {
    width: 45px;
}

.stack {
    display: flex;
    flex-direction: column;
}

.stack button {
    display: flex;
    align-items: center;
    gap: 5px;
    height: 24px;
    text-align: left;
}

.stack .caret {
    margin-left: 3px;
}

.work {
    width: 67px;
}

.pattern {
    width: 94px;
    padding-left: 5px;
}

.surface {
    width: 73px;
    padding-left: 5px;
}

.tool {
    display: flex;
    align-items: center;
    justify-content: center;
    gap: 6px;
    width: 24px;
    height: 23px;
    margin: 2px 0 0 6px;
    border: 1px solid #ccc;
    background-color: #f6f6f6;
}

.tool.wide {
    width: 35px;
    margin-left: 1px;
}

/* middle: browser and canvas */
main {
    display: flex;
    flex: 1;
    min-height: 0;
}

.browser {
    display: flex;
    flex-direction: column;
    flex: none;
    width: 246px;
    padding: 4px 3px 3px;
    border-bottom: 1px solid #999;
}

.grip {
    display: flex;
    align-items: center;
    gap: 6px;
    height: 10px;
}

.grip span {
    flex: 1;
    height: 5px;
    margin-left: 1px;
    border: 1px solid #999;
    border-left: none;
    background-color: #fff;
}

.grip button {
    padding-right: 3px;
}

.browser-title {
    display: flex;
    align-items: center;
    justify-content: space-between;
    height: 21px;
    margin-top: 2px;
    padding: 0 3px 0 8px;
    color: #fff;
    background-color: #ababab;
}

.browser-title h2 {
    font-size: 12px;
    font-weight: bold;
}

.browser-title .caret {
    margin-bottom: 2px;
    border-top-color: #fff;
}

.tip-mark {
    font: bold 10px 'Open Sans', sans-serif;
    fill: #14148c;
}

.browser-tools {
    display: flex;
    align-items: center;
    gap: 8px;
    height: 27px;
    padding: 0 4px 3px;
}

.browser-tools span {
    width: 1px;
    height: 18px;
    background-color: #999;
}

.tree {
    flex: 1;
    list-style: none;
    color: #000;
    background-color: #fff;
    border: 1px solid #666;
}

.tree li {
    display: flex;
    align-items: center;
    height: 18px;
    gap: 2px;
}

.tree .root {
    gap: 1px;
    padding-left: 4px;
}

/* plus box with the branch line running behind it */
.expander {
    align-self: stretch;
    width: 22px;
    background:
        linear-gradient(#333, #333) 6px 9px / 5px 1px no-repeat,
        linear-gradient(#333, #333) 8px 7px / 1px 5px no-repeat,
        linear-gradient(#fff, #fff) 5px 6px / 7px 7px no-repeat,
        linear-gradient(#808080, #808080) 4px 5px / 9px 9px no-repeat,
        linear-gradient(#999, #999) 8px 0 / 1px 18px no-repeat,
        linear-gradient(#999, #999) 8px 9px / 12px 1px no-repeat;
}

.end .expander {
    background:
        linear-gradient(#999, #999) 8px 0 / 1px 10px no-repeat,
        linear-gradient(#999, #999) 8px 9px / 12px 1px no-repeat;
}

.work-area {
    display: flex;
    flex-direction: column;
    flex: 1;
    min-width: 0;
    border-left: 1px solid #666;
}

.canvas {
    position: relative;
    flex: 1;
    min-height: 0;
    margin-right: 2px;
    background: linear-gradient(#2e2e2e, #a3a3a3);
}

.model {
    width: 100%;
    height: 100%;
}

.doc-btns {
    position: absolute;
    top: 7px;
    right: 1px;
    display: flex;
    gap: 8px;
}

.view-cube {
    position: absolute;
    top: 43px;
    right: 19px;
}

.view-cube text {
    font: bold 7px 'Liberation Sans', sans-serif;
    fill: #4c4c4c;
}

.view-cube .small {
    font-size: 6px;
}

.nav-bar {
    position: absolute;
    top: 119px;
    right: 0;
    display: flex;
    flex-direction: column;
    align-items: center;
    width: 36px;
    padding: 3px 2px;
    border: 2px solid #4a4a4a;
    border-radius: 6px;
    background: linear-gradient(#747474, #949494);
}

.nav-bar button {
    padding: 4px 0;
}

.nav-bar .mini {
    align-self: flex-end;
    padding: 0 1px 0 0;
}

.nav-bar .wheel {
    padding: 10px 0 7px;
}

.nav-bar hr {
    width: 26px;
    border: none;
    border-top: 1px solid #555;
}

.nav-bar .caret {
    margin: 4px 0 3px;
}

.nav-bar .mini:last-child {
    margin-top: 7px;
}

.axes {
    position: absolute;
    left: 43px;
    bottom: 31px;
}

.axes text {
    font: bold 10px 'Liberation Sans', sans-serif;
}

/* open documents */
.doc-tabs {
    display: flex;
    align-items: flex-start;
    height: 21px;
    color: #111;
    background: linear-gradient(#d0d0d0, #ababab);
    border-top: 2px solid #f4f4f4;
    box-shadow: inset 0 1px 0 #555;
}

.doc-tabs a {
    display: flex;
    gap: 7px;
    height: 18px;
    padding: 0 11px 0 8px;
    line-height: 18px;
    white-space: nowrap;
    background: linear-gradient(#dadada, #b9b9b9);
    border: 1px solid #666;
    border-left-width: 0;
    border-radius: 0 0 5px 5px;
    corner-shape: bevel;
}

.doc-tabs .first {
    border-left-width: 1px;
}

.doc-tabs .hover {
    background: linear-gradient(#f0f8fc, #c4e2f0);
}

.doc-tabs .active {
    background: #fff;
}

.doc-tabs a svg {
    margin-top: 3px;
}

.win {
    display: flex;
    align-items: center;
    justify-content: center;
    width: 20px;
    height: 19px;
    border: 1px solid #444;
    border-left-width: 0;
    background-color: #e4e4e4;
}

.win.up {
    padding-bottom: 7px;
}

.scroll {
    padding: 5px 14px;
}

/* status bar */
.status {
    display: flex;
    align-items: center;
    flex: none;
    height: 26px;
    padding: 2px 0 0 1px;
    color: #000;
    background: linear-gradient(#fdfdfd, #b4b4b4);
}

.status .help {
    flex: 1;
}

.cell {
    width: 39px;
    padding-left: 8px;
    line-height: 21px;
    border-left: 1px solid #ddd;
}

/* taskbar */
.taskbar {
    display: flex;
    align-items: flex-end;
    gap: 2px;
    flex: none;
    height: 30px;
    border-top: 1px solid #40546c;
    background: linear-gradient(90deg, #7e92ac 0, #8499b3 50px, #a5bfdc 62px, #a5bfdc calc(100% - 232px), #8196b0 calc(100% - 160px), #7c8fa9 100%);
}

.start-orb {
    width: 57px;
    height: 35px;
    padding-left: 9px;
    z-index: 1;
}

.task {
    display: flex;
    align-items: center;
    justify-content: center;
    width: 44px;
    height: 29px;
}

.task.open {
    border: 1px solid #4f6680;
    border-radius: 3px;
    box-shadow: inset 0 0 0 1px #d4e2f0;
    background: linear-gradient(135deg, #d4e0ee, #a0b8d4 60%, #b4cae2);
}

.task.current {
    border: 1px solid #4f6680;
    border-radius: 3px;
    background: linear-gradient(135deg, #fff, #dce6f2);
}

.s-mark {
    font: bold 12px 'Open Sans', sans-serif;
    fill: #fff;
}

.tray {
    display: flex;
    align-items: center;
    align-self: stretch;
    margin-left: auto;
    color: #fff;
}

.lang {
    padding: 0 16px 4px 0;
}

.tray button {
    padding-right: 8px;
}

.tray button:first-of-type {
    padding-right: 13px;
}

.tray time {
    width: 71px;
    padding-left: 13px;
}

.tray .desktop {
    align-self: stretch;
    width: 15px;
    border: 1px solid #4c5c72;
    background: linear-gradient(135deg, #9aa8ba, #5c6c82);
}
```
